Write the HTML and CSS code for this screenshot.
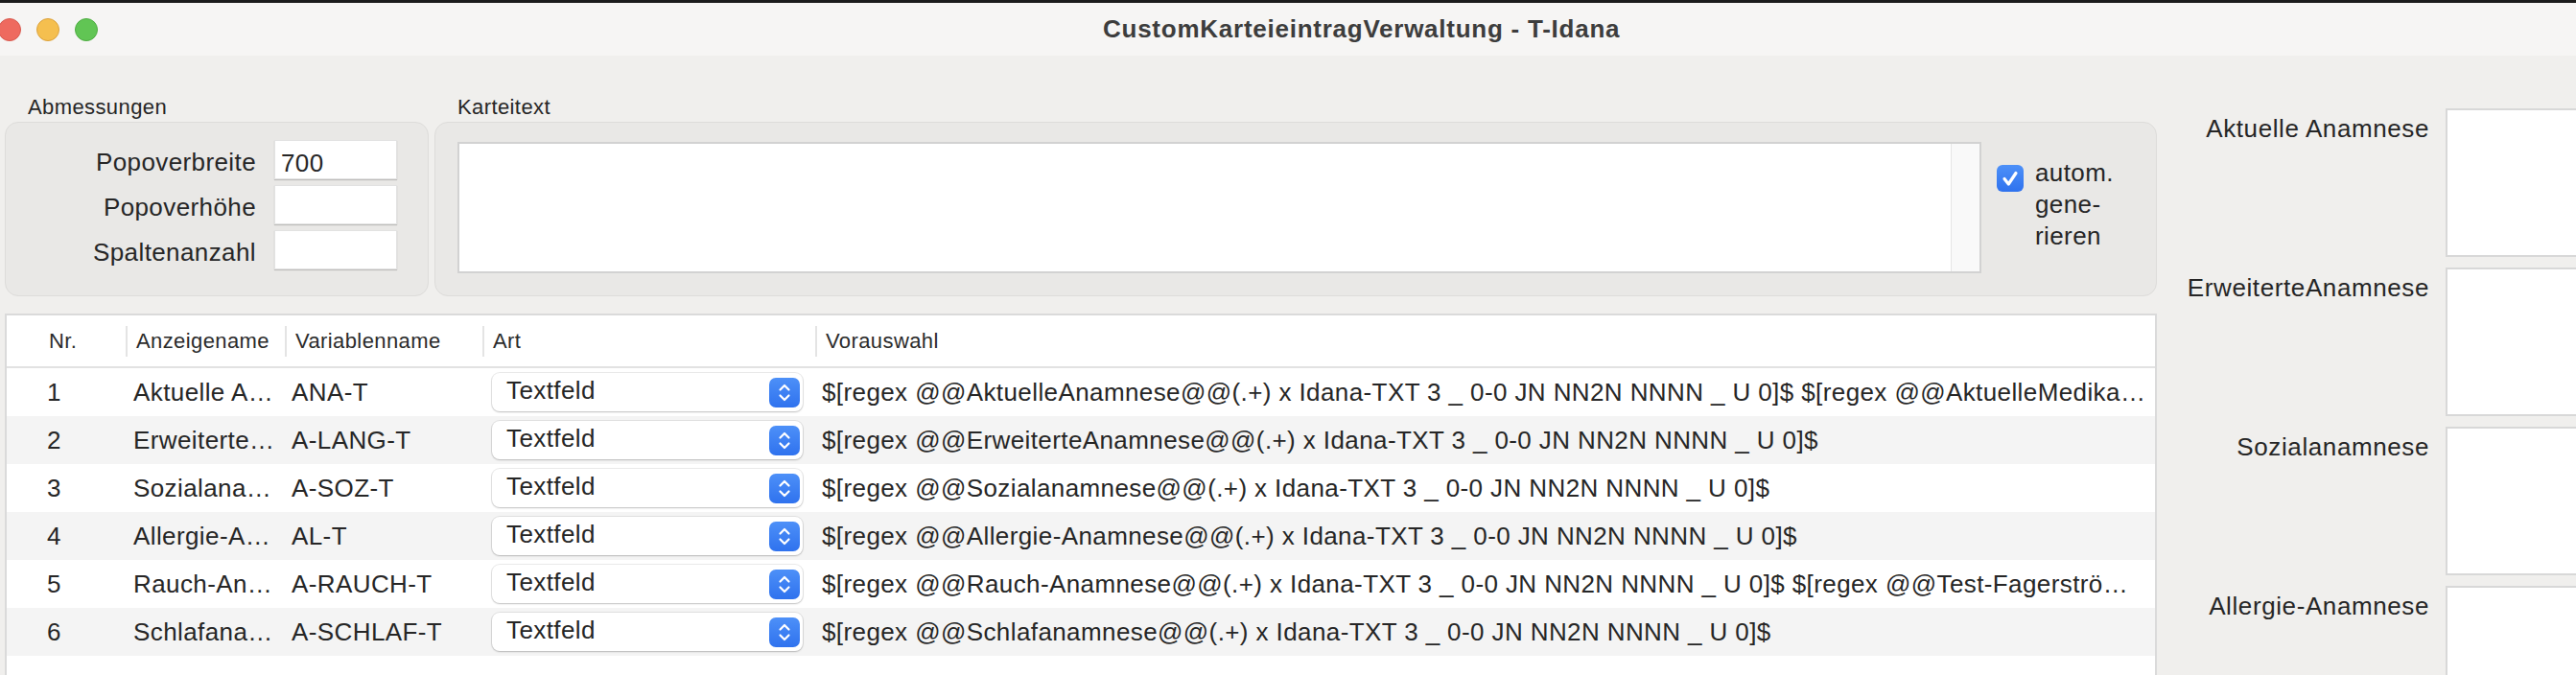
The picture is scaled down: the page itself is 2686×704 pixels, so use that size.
FILE: index.html
```html
<!DOCTYPE html>
<html lang="de">
<head>
<meta charset="utf-8">
<title>CustomKarteieintragVerwaltung - T-Idana</title>
<link rel="stylesheet" href="styles.css">
</head>
<body>
<div class="window">
  <header class="titlebar">
    <div class="lights">
      <span class="light red"></span>
      <span class="light yellow"></span>
      <span class="light green"></span>
    </div>
    <div class="title">CustomKarteieintragVerwaltung - T-Idana</div>
  </header>

  <div class="main">
    <div class="left">
      <div class="top">
        <section class="group dims">
          <div class="group-label">Abmessungen</div>
          <div class="box dims-box">
            <div class="field"><span class="field-label">Popoverbreite</span><span class="input">700</span></div>
            <div class="field"><span class="field-label">Popoverhöhe</span><span class="input"></span></div>
            <div class="field"><span class="field-label">Spaltenanzahl</span><span class="input"></span></div>
          </div>
        </section>
        <section class="group text">
          <div class="group-label">Karteitext</div>
          <div class="box text-box">
            <div class="textarea">
              <div class="ta-body"></div>
              <div class="ta-scroll"></div>
            </div>
            <div class="auto">
              <span class="checkbox">
                <svg width="28" height="28" viewBox="0 0 28 28"><path d="M8 14.5 L12.3 20 L20 8.5" fill="none" stroke="#fff" stroke-width="3.2" stroke-linecap="round" stroke-linejoin="round"/></svg>
              </span>
              <div class="auto-label">autom.<br>gene-<br>rieren</div>
            </div>
          </div>
        </section>
      </div>

      <div class="table">
        <div class="thead">
          <div class="th first">Nr.</div>
          <div class="th sep">Anzeigename</div>
          <div class="th sep">Variablenname</div>
          <div class="th sep">Art</div>
          <div class="th sep">Vorauswahl</div>
        </div>

        <div class="tr">
          <div class="td nr">1</div>
          <div class="td name">Aktuelle A…</div>
          <div class="td var">ANA-T</div>
          <div class="td art"><div class="select"><span class="select-text">Textfeld</span><span class="select-btn"><svg width="32" height="31" viewBox="0 0 32 31"><path d="M11.5 12.5 L16 8 L20.5 12.5 M11.5 18.5 L16 23 L20.5 18.5" fill="none" stroke="#fff" stroke-width="2.2" stroke-linecap="round" stroke-linejoin="round"/></svg></span></div></div>
          <div class="td pre">$[regex @@AktuelleAnamnese@@(.+) x Idana-TXT 3 _ 0-0 JN NN2N NNNN _ U 0]$ $[regex @@AktuelleMedika…</div>
        </div>
        <div class="tr alt">
          <div class="td nr">2</div>
          <div class="td name">Erweiterte…</div>
          <div class="td var">A-LANG-T</div>
          <div class="td art"><div class="select"><span class="select-text">Textfeld</span><span class="select-btn"><svg width="32" height="31" viewBox="0 0 32 31"><path d="M11.5 12.5 L16 8 L20.5 12.5 M11.5 18.5 L16 23 L20.5 18.5" fill="none" stroke="#fff" stroke-width="2.2" stroke-linecap="round" stroke-linejoin="round"/></svg></span></div></div>
          <div class="td pre">$[regex @@ErweiterteAnamnese@@(.+) x Idana-TXT 3 _ 0-0 JN NN2N NNNN _ U 0]$</div>
        </div>
        <div class="tr">
          <div class="td nr">3</div>
          <div class="td name">Sozialana…</div>
          <div class="td var">A-SOZ-T</div>
          <div class="td art"><div class="select"><span class="select-text">Textfeld</span><span class="select-btn"><svg width="32" height="31" viewBox="0 0 32 31"><path d="M11.5 12.5 L16 8 L20.5 12.5 M11.5 18.5 L16 23 L20.5 18.5" fill="none" stroke="#fff" stroke-width="2.2" stroke-linecap="round" stroke-linejoin="round"/></svg></span></div></div>
          <div class="td pre">$[regex @@Sozialanamnese@@(.+) x Idana-TXT 3 _ 0-0 JN NN2N NNNN _ U 0]$</div>
        </div>
        <div class="tr alt">
          <div class="td nr">4</div>
          <div class="td name">Allergie-A…</div>
          <div class="td var">AL-T</div>
          <div class="td art"><div class="select"><span class="select-text">Textfeld</span><span class="select-btn"><svg width="32" height="31" viewBox="0 0 32 31"><path d="M11.5 12.5 L16 8 L20.5 12.5 M11.5 18.5 L16 23 L20.5 18.5" fill="none" stroke="#fff" stroke-width="2.2" stroke-linecap="round" stroke-linejoin="round"/></svg></span></div></div>
          <div class="td pre">$[regex @@Allergie-Anamnese@@(.+) x Idana-TXT 3 _ 0-0 JN NN2N NNNN _ U 0]$</div>
        </div>
        <div class="tr">
          <div class="td nr">5</div>
          <div class="td name">Rauch-An…</div>
          <div class="td var">A-RAUCH-T</div>
          <div class="td art"><div class="select"><span class="select-text">Textfeld</span><span class="select-btn"><svg width="32" height="31" viewBox="0 0 32 31"><path d="M11.5 12.5 L16 8 L20.5 12.5 M11.5 18.5 L16 23 L20.5 18.5" fill="none" stroke="#fff" stroke-width="2.2" stroke-linecap="round" stroke-linejoin="round"/></svg></span></div></div>
          <div class="td pre">$[regex @@Rauch-Anamnese@@(.+) x Idana-TXT 3 _ 0-0 JN NN2N NNNN _ U 0]$ $[regex @@Test-Fagerströ…</div>
        </div>
        <div class="tr alt">
          <div class="td nr">6</div>
          <div class="td name">Schlafana…</div>
          <div class="td var">A-SCHLAF-T</div>
          <div class="td art"><div class="select"><span class="select-text">Textfeld</span><span class="select-btn"><svg width="32" height="31" viewBox="0 0 32 31"><path d="M11.5 12.5 L16 8 L20.5 12.5 M11.5 18.5 L16 23 L20.5 18.5" fill="none" stroke="#fff" stroke-width="2.2" stroke-linecap="round" stroke-linejoin="round"/></svg></span></div></div>
          <div class="td pre">$[regex @@Schlafanamnese@@(.+) x Idana-TXT 3 _ 0-0 JN NN2N NNNN _ U 0]$</div>
        </div>
      </div>
    </div>

    <aside class="right">
      <div class="preview-row"><div class="preview-label">Aktuelle Anamnese</div><div class="preview-box"></div></div>
      <div class="preview-row"><div class="preview-label">ErweiterteAnamnese</div><div class="preview-box"></div></div>
      <div class="preview-row"><div class="preview-label">Sozialanamnese</div><div class="preview-box"></div></div>
      <div class="preview-row"><div class="preview-label">Allergie-Anamnese</div><div class="preview-box"></div></div>
    </aside>
  </div>
</div>
</body>
</html>
```

FILE: styles.css
```css
* { box-sizing: border-box; }

html, body {
  margin: 0;
  padding: 0;
}

body {
  width: 2686px;
  height: 704px;
  overflow: hidden;
  background: #f0efed;
  font-family: "Liberation Sans", Arial, sans-serif;
  letter-spacing: 0.4px;
  color: #262626;
}

.window {
  width: 2686px;
  height: 704px;
  display: flex;
  flex-direction: column;
  overflow: hidden;
}

/* ---------- title bar ---------- */
.titlebar {
  height: 58px;
  flex: none;
  border-top: 3px solid #1c1c1c;
  background: #f6f5f4;
  display: flex;
  align-items: center;
}

.lights {
  display: flex;
  gap: 16px;
  margin-left: -2px;
}

.light {
  width: 24px;
  height: 24px;
  border-radius: 50%;
  display: block;
}
.light.red { background: #ee6a5f; border: 1px solid #d85a4f; }
.light.yellow { background: #f5bf4f; border: 1px solid #dca23c; }
.light.green { background: #61c554; border: 1px solid #4ead42; }

.title {
  margin-left: 1048px;
  font-size: 26px;
  font-weight: bold;
  letter-spacing: 0.75px;
  color: #3d3d3d;
}

/* ---------- main ---------- */
.main {
  flex: 1;
  display: flex;
  min-height: 0;
}

.left {
  width: 2244px;
  margin-left: 5px;
  flex: none;
  display: flex;
  flex-direction: column;
}

.top {
  display: flex;
  gap: 6px;
  margin-top: 41px;
}

.group {
  display: flex;
  flex-direction: column;
}
.group.dims { width: 442px; flex: none; }
.group.text { flex: 1; }

.group-label {
  font-size: 22px;
  line-height: 26px;
  padding-left: 24px;
  margin-bottom: 2px;
  color: #262626;
}

.box {
  height: 182px;
  background: #e9e8e6;
  border: 1px solid #dddcda;
  border-radius: 14px;
}

/* Abmessungen */
.dims-box {
  padding-top: 18px;
  display: flex;
  flex-direction: column;
  gap: 6px;
}

.field {
  display: flex;
  align-items: center;
  gap: 19px;
}

.field-label {
  width: 261px;
  text-align: right;
  font-size: 26px;
  line-height: 30px;
  padding-top: 4px;
}

.input {
  width: 128px;
  height: 41px;
  background: #fff;
  border: 1px solid #e2e2e2;
  box-shadow: 0 1px 1px rgba(0, 0, 0, 0.18);
  font-size: 26px;
  line-height: 30px;
  padding: 8px 0 0 6px;
}

/* Karteitext */
.text-box {
  display: flex;
  align-items: flex-start;
  padding: 20px 0 0 23px;
}

.textarea {
  width: 1589px;
  height: 137px;
  border: 2px solid #d2d2d2;
  background: #fff;
  display: flex;
}
.ta-body { flex: 1; }
.ta-scroll {
  width: 30px;
  background: #f9f9f9;
  border-left: 1px solid #e6e6e6;
}

.auto {
  display: flex;
  align-items: flex-start;
  margin-left: 16px;
  margin-top: 24px;
}

.checkbox {
  width: 28px;
  height: 28px;
  border-radius: 6px;
  background: linear-gradient(#4d90f8, #2f72ee);
  display: block;
  flex: none;
}
.checkbox svg { display: block; }

.auto-label {
  margin-left: 12px;
  margin-top: -8px;
  font-size: 26px;
  line-height: 33px;
}

/* ---------- table ---------- */
.table {
  margin-top: 18px;
  height: 420px;
  flex: none;
  background: #fff;
  border: 2px solid #dadada;
}

.thead,
.tr {
  display: grid;
  grid-template-columns: 124px 166px 206px 347px 1397px;
}

.thead {
  height: 55px;
  border-bottom: 2px solid #e2e2e2;
  align-items: center;
}

.th {
  font-size: 22px;
  line-height: 32px;
  height: 32px;
  color: #2b2b2b;
  white-space: nowrap;
  overflow: hidden;
}
.th.first { padding-left: 44px; }
.th.sep {
  border-left: 2px solid #e4e4e4;
  padding-left: 9px;
}

.tr {
  height: 50px;
  align-items: center;
}
.tr.alt { background: #f4f4f4; }

.td {
  font-size: 26px;
  line-height: 30px;
  white-space: nowrap;
  overflow: hidden;
  color: #262626;
}
.td.nr { padding-left: 42px; }
.td.name { padding-left: 8px; }
.td.var { padding-left: 7px; }
.td.art { padding-left: 10px; overflow: visible; }
.td.pre { padding-left: 7px; }

.select {
  width: 324px;
  height: 40px;
  background: #fff;
  border-radius: 8px;
  box-shadow: 0 0 0 1px rgba(0, 0, 0, 0.08), 0 1px 2px rgba(0, 0, 0, 0.18);
  display: flex;
  align-items: center;
  justify-content: space-between;
  padding: 0 3px 0 15px;
}

.select-text {
  font-size: 26px;
  line-height: 30px;
  margin-top: -4px;
}

.select-btn {
  width: 32px;
  height: 31px;
  border-radius: 7px;
  background: linear-gradient(#4d90f8, #2f72ee);
  display: block;
}
.select-btn svg { display: block; }

/* ---------- right preview panel ---------- */
.right {
  flex: 1;
  padding-top: 55px;
  display: flex;
  flex-direction: column;
  gap: 11px;
}

.preview-row {
  display: flex;
  align-items: flex-start;
  gap: 17px;
}

.preview-label {
  width: 284px;
  text-align: right;
  font-size: 26px;
  line-height: 30px;
  padding-top: 6px;
  letter-spacing: 0.6px;
  white-space: nowrap;
}

.preview-box {
  width: 220px;
  height: 155px;
  flex: none;
  background: #fff;
  border: 2px solid #d8d8d8;
}
```
